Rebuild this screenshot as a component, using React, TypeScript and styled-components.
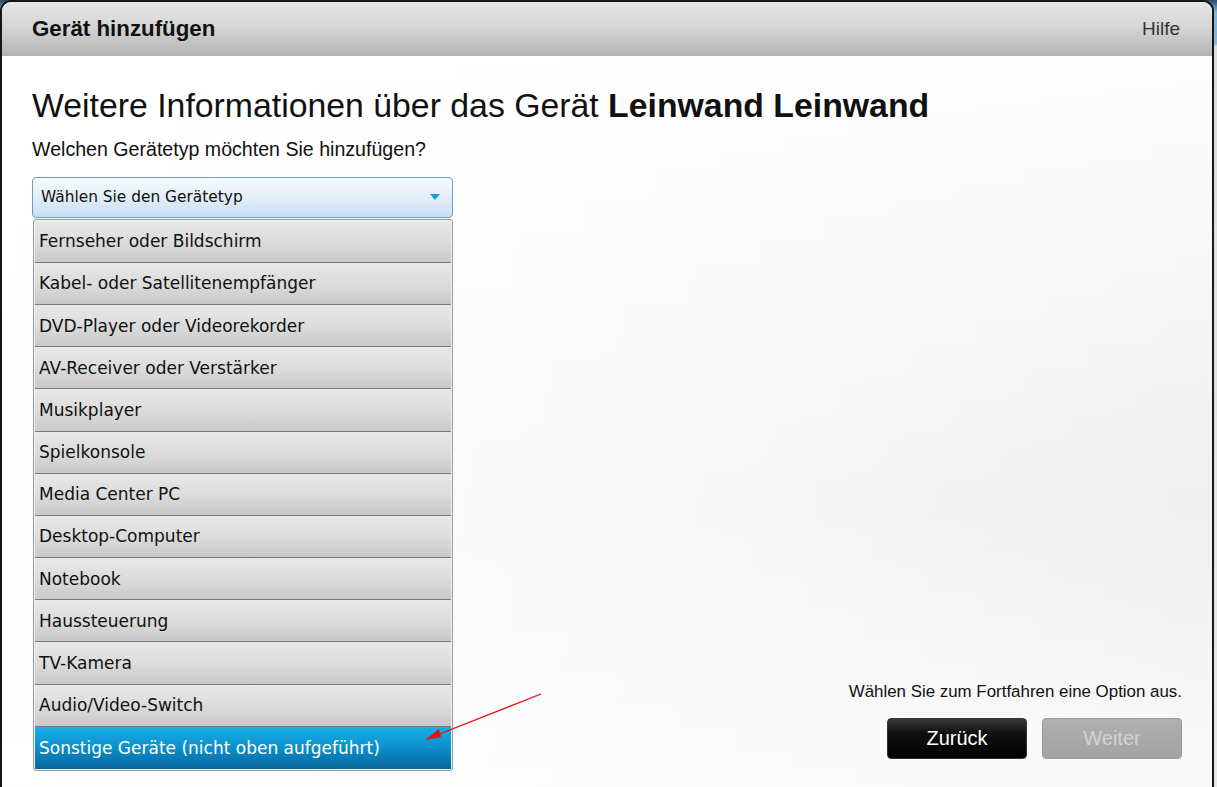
import React from "react";
import styled, { createGlobalStyle } from "styled-components";

const Global = createGlobalStyle`
  html, body { margin: 0; padding: 0; height: 100%; overflow: hidden; }
  body { font-family: "Liberation Sans", Arial, sans-serif; }
  #root { height: 100%; }
`;

const Backdrop = styled.div`
  height: 100%;
  background: linear-gradient(180deg, #2c4a6b 0px, #7fb3d6 12px, #8ab8d8 44px, #dcdcdc 46px, #e9e9e9 100%);
  display: flex;
  align-items: flex-start;
`;

const Dialog = styled.div`
  width: 1210px;
  height: 800px;
  border: 2px solid #161616;
  border-bottom: none;
  border-radius: 11px 11px 0 0;
  overflow: hidden;
  display: flex;
  flex-direction: column;
  background: linear-gradient(100deg, #ffffff 0%, #fbfbfb 40%, #eeeeee 100%);
  position: relative;
`;

const Header = styled.div`
  height: 54px;
  flex: none;
  display: flex;
  align-items: center;
  justify-content: space-between;
  padding: 0 32px 0 30px;
  background: linear-gradient(180deg, #e6e6e6 0%, #d6d6d6 45%, #b3b3b3 100%);
`;

const Title = styled.h1`
  margin: 0;
  font-size: 22.3px;
  font-weight: bold;
  color: #111;
`;

const Help = styled.span`
  font-size: 19px;
  color: #333;
`;

const Body = styled.div`
  flex: 1;
  display: flex;
  flex-direction: column;
  padding: 30px 30px 0 30px;
  background: linear-gradient(180deg, rgba(255,255,255,0.9) 0%, rgba(255,255,255,0) 60%, rgba(255,255,255,0.7) 100%);
`;

const Heading = styled.h2`
  margin: 0;
  font-size: 33.8px;
  font-weight: normal;
  color: #111;
  line-height: 38px;
  b { font-weight: bold; }
`;

const Question = styled.p`
  margin: 13px 0 0 0;
  font-size: 19.6px;
  line-height: 24px;
  color: #111;
`;

const Row = styled.div`
  display: flex;
  margin-top: 16px;
  height: 594px;
`;

const LeftCol = styled.div`
  width: 421px;
  flex: none;
  display: flex;
  flex-direction: column;
`;

const Select = styled.div`
  height: 42px;
  box-sizing: border-box;
  border: 1px solid #6e9fc4;
  border-radius: 4px;
  background: linear-gradient(180deg, #f6fafd 0%, #e3eef8 50%, #c6def1 100%);
  display: flex;
  align-items: center;
  justify-content: space-between;
  padding: 0 12px 0 8px;
  font-family: "DejaVu Sans", Verdana, sans-serif;
  font-size: 15.4px;
  color: #111;
`;

const Caret = styled.span`
  width: 0;
  height: 0;
  border-left: 5px solid transparent;
  border-right: 5px solid transparent;
  border-top: 6px solid #1c9bd8;
`;

const List = styled.div`
  margin: 1px 0 0 1px;
  width: 420px;
  box-sizing: border-box;
  border: 1px solid #8d99a4;
  border-radius: 3px;
  background: #f3f3f3;
  padding: 1px;
  display: flex;
  flex-direction: column;
`;

const Item = styled.div<{ $active?: boolean }>`
  height: 42.2px;
  box-sizing: border-box;
  display: flex;
  align-items: center;
  padding-left: 4px;
  font-family: "DejaVu Sans", Verdana, sans-serif;
  font-size: 17px;
  color: ${(p) => (p.$active ? "#fff" : "#111")};
  border-bottom: 1px solid ${(p) => (p.$active ? "#0a5a88" : "#7a7a7a")};
  background: ${(p) =>
    p.$active
      ? "linear-gradient(180deg, #17aeea 0%, #0a8fcb 50%, #08679c 100%)"
      : "linear-gradient(180deg, #e8e8e8 0%, #dcdcdc 50%, #c9c9c9 100%)"};
  &:last-child { border-bottom: none; }
`;

const RightCol = styled.div`
  flex: 1;
  display: flex;
  flex-direction: column;
  justify-content: flex-end;
  align-items: flex-end;
  padding: 0 0 12px 0;
`;

const Hint = styled.p`
  margin: 0 0 16px 0;
  font-size: 16.9px;
  color: #111;
`;

const Buttons = styled.div`
  display: flex;
  gap: 15px;
`;

const Button = styled.button<{ $disabled?: boolean }>`
  width: 140px;
  height: 41px;
  border-radius: 4px;
  font-family: "Liberation Sans", Arial, sans-serif;
  font-size: 20px;
  cursor: pointer;
  border: 1px solid ${(p) => (p.$disabled ? "#9a9a9a" : "#333")};
  color: ${(p) => (p.$disabled ? "#d2d2d2" : "#fff")};
  background: ${(p) =>
    p.$disabled
      ? "linear-gradient(180deg, #b0b0b0 0%, #a2a2a2 100%)"
      : "linear-gradient(180deg, #3a3a3a 0%, #111 35%, #000 100%)"};
`;

const Annotation = styled.svg`
  position: absolute;
  left: 420px;
  top: 685px;
  overflow: visible;
  pointer-events: none;
`;

const items = [
  "Fernseher oder Bildschirm",
  "Kabel- oder Satellitenempfänger",
  "DVD-Player oder Videorekorder",
  "AV-Receiver oder Verstärker",
  "Musikplayer",
  "Spielkonsole",
  "Media Center PC",
  "Desktop-Computer",
  "Notebook",
  "Haussteuerung",
  "TV-Kamera",
  "Audio/Video-Switch",
  "Sonstige Geräte (nicht oben aufgeführt)",
];

export default function App() {
  return (
    <>
      <Global />
      <Backdrop>
        <Dialog>
          <Header>
            <Title>Gerät hinzufügen</Title>
            <Help>Hilfe</Help>
          </Header>
          <Body>
            <Heading>
              Weitere Informationen über das Gerät <b>Leinwand Leinwand</b>
            </Heading>
            <Question>Welchen Gerätetyp möchten Sie hinzufügen?</Question>
            <Row>
              <LeftCol>
                <Select>
                  <span>Wählen Sie den Gerätetyp</span>
                  <Caret />
                </Select>
                <List>
                  {items.map((it, i) => (
                    <Item key={it} $active={i === items.length - 1}>
                      {it}
                    </Item>
                  ))}
                </List>
              </LeftCol>
              <RightCol>
                <Hint>Wählen Sie zum Fortfahren eine Option aus.</Hint>
                <Buttons>
                  <Button>Zurück</Button>
                  <Button $disabled>Weiter</Button>
                </Buttons>
              </RightCol>
            </Row>
          </Body>
          <Annotation width="130" height="60">
            <line x1="119" y1="7" x2="10" y2="50" stroke="#e81010" strokeWidth="1.3" />
            <polygon points="3,53 17,42 19,50" fill="#e81010" />
          </Annotation>
        </Dialog>
      </Backdrop>
    </>
  );
}
